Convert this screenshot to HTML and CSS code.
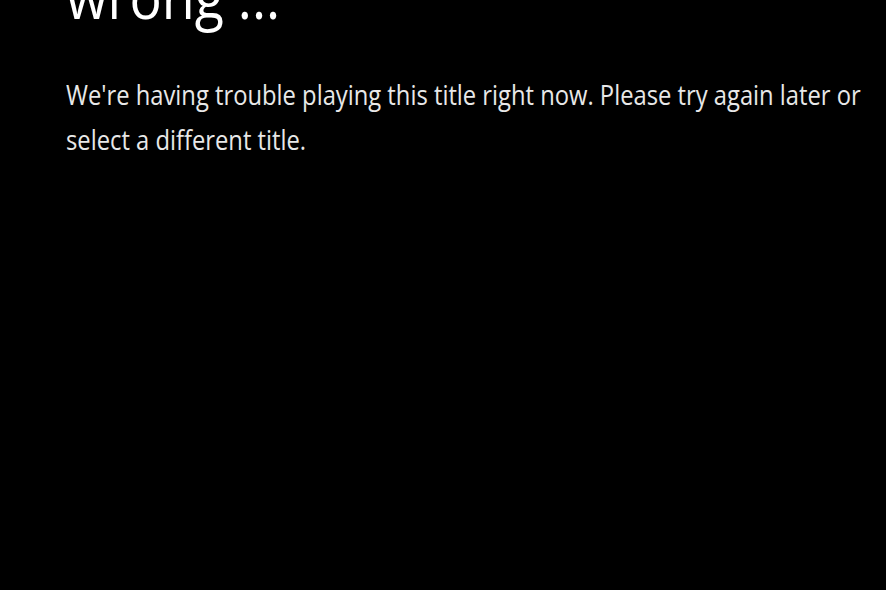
FILE: index.html
```html
<!DOCTYPE html>
<html lang="en">
<head>
<meta charset="utf-8">
<title>Playback error</title>
<link rel="stylesheet" href="styles.css">
</head>
<body>
<main class="screen">
  <div class="message">
    <h1 class="title">wrong ...</h1>
    <p class="body-text">We're having trouble playing this title right now. Please try again later or select a different title.</p>
  </div>
</main>
</body>
</html>
```
FILE: styles.css
```css
html, body {
  margin: 0;
  padding: 0;
  background: #000;
  height: 100%;
  overflow: hidden;
}
.screen {
  padding-left: 66px;
  color: #e8e8e8;
  font-family: "Open Sans", "Noto Sans", sans-serif;
}
.message {
  width: 920px;
  transform: scaleX(0.88);
  transform-origin: 0 0;
}
.title {
  margin: -39px 0 0;
  font-weight: 400;
  font-size: 61px;
  line-height: 70px;
  color: #fff;
}
.body-text {
  margin: 41px 0 0;
  font-size: 27px;
  line-height: 45px;
}
```
